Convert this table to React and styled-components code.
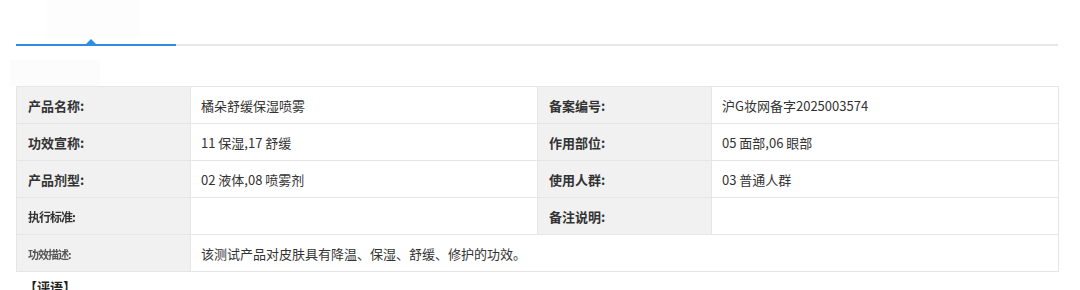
import React from 'react';
import styled, { createGlobalStyle } from 'styled-components';

const GlobalStyle = createGlobalStyle`
  body {
    margin: 0;
    background: #fff;
    font-family: "Noto Sans CJK SC", "Noto Sans", "Liberation Sans", sans-serif;
    overflow: hidden;
  }
`;

const rows = [
  { l1: '产品名称:', v1: '橘朵舒缓保湿喷雾', l2: '备案编号:', v2: '沪G妆网备字2025003574' },
  { l1: '功效宣称:', v1: '11 保湿,17 舒缓', l2: '作用部位:', v2: '05 面部,06 眼部' },
  { l1: '产品剂型:', v1: '02 液体,08 喷雾剂', l2: '使用人群:', v2: '03 普通人群' },
  { l1: '执行标准:', blur1: true, v1: '', l2: '备注说明:', v2: '' },
];

const App = () => {
  return (
    <Page>
      <GlobalStyle />
      <TabBar>
        <ActiveTab>
          <TabLabel />
        </ActiveTab>
      </TabBar>
      <SectionTitle />
      <InfoTable>
        <colgroup>
          <col style={{ width: 174 }} />
          <col style={{ width: 347 }} />
          <col style={{ width: 174 }} />
          <col style={{ width: 347 }} />
        </colgroup>
        <tbody>
          {rows.map((r, i) => (
            <tr key={i}>
              <Label>{r.blur1 ? <Blurred>{r.l1}</Blurred> : r.l1}</Label>
              <Value>{r.v1}</Value>
              <Label>{r.l2}</Label>
              <Value>{r.v2}</Value>
            </tr>
          ))}
          <tr>
            <Label><Blurred thin>功效描述:</Blurred></Label>
            <Value colSpan={3}>该测试产品对皮肤具有降温、保湿、舒缓、修护的功效。</Value>
          </tr>
        </tbody>
      </InfoTable>
      <Note>【评语】</Note>
    </Page>
  );
};

const Page = styled.div`
  width: 1042px;
  padding: 0 22px 0 16px;
`;

const TabBar = styled.div`
  height: 44px;
  border-bottom: 2px solid #e8e8e8;
  display: flex;
`;

const ActiveTab = styled.div`
  position: relative;
  width: 160px;
  height: 44px;
  margin-bottom: -2px;
  border-bottom: 2px solid #2f8be3;

  &::after {
    content: '';
    position: absolute;
    left: 70px;
    bottom: 0;
    border-left: 5px solid transparent;
    border-right: 5px solid transparent;
    border-bottom: 5px solid #2f8be3;
  }
`;

const TabLabel = styled.div`
  margin-left: 31px;
  width: 93px;
  height: 38px;
  background: #fdfdfd;
`;

const SectionTitle = styled.div`
  margin: 14px 0 0 -6px;
  width: 90px;
  height: 26px;
  background: #fcfcfc;
`;

const InfoTable = styled.table`
  width: 1042px;
  border-collapse: collapse;
  table-layout: fixed;
  border-top: 1px solid #9fc1ee;
  font-size: 13px;
  color: #333;
`;

const Cell = styled.td`
  height: 37px;
  padding: 0 10px;
  border: 1px solid #e6e6e6;
  box-sizing: border-box;
  white-space: nowrap;
`;

const Label = styled(Cell)`
  background: #f1f1f1;
  font-weight: bold;
  padding-left: 11px;
`;

const Value = styled(Cell)`
  background: #fff;
`;

const Blurred = styled.span`
  display: inline-block;
  font-size: ${p => (p.thin ? '11px' : '12px')};
  letter-spacing: -1px;
  filter: blur(0.6px);
  color: ${p => (p.thin ? '#555' : '#333')};
`;

const Note = styled.div`
  margin: 6px 0 0 8px;
  font-size: 13px;
  line-height: 18px;
  font-weight: bold;
  color: #222;
`;

export default App;
